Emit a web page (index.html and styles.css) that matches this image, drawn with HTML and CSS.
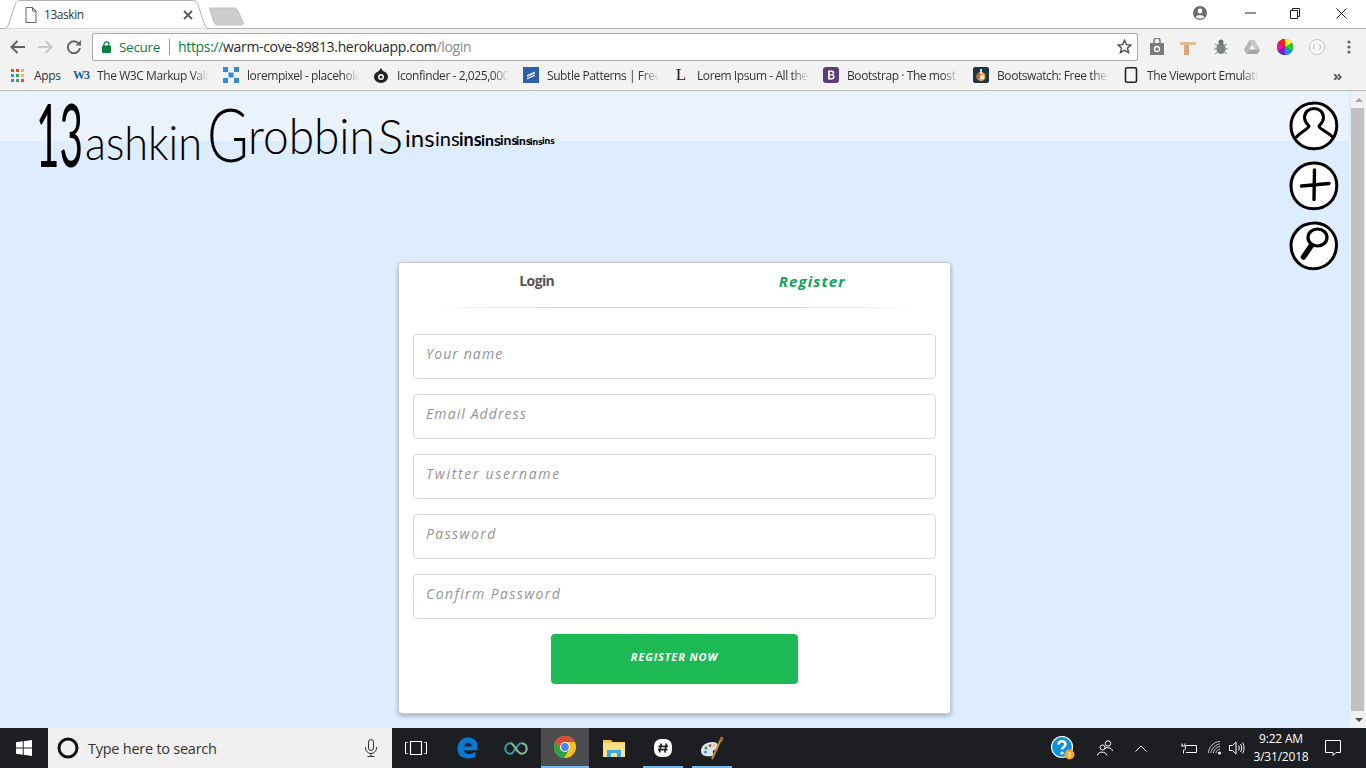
FILE: index.html
```html
<!DOCTYPE html>
<html lang="en">
<head>
<meta charset="utf-8">
<title>13askin</title>
<link rel="stylesheet" href="styles.css">
</head>
<body>
<div class="browser">
  <div class="tabstrip">
    <div class="tab">
      <svg class="tab-shape" width="212" height="29" viewBox="0 0 212 29"><path d="M0 28.5H4C7 28.5 8 26 9 23L15 5C16 2 17 .5 21 .5H192C196 .5 197 2 198 5L204 23C205 26 206 28.5 209 28.5H212" fill="#fff" stroke="#b3b3b3"/></svg>
      <svg class="tab-icon" width="12" height="16" viewBox="0 0 12 16"><path d="M1 .5H7.5L11 4V15.5H1ZM7.5 .5V4H11" fill="#fff" stroke="#5f6368"/></svg>
      <span class="tab-title">13askin</span>
      <svg class="tab-close" width="10" height="10" viewBox="0 0 10 10"><path d="M1 1L9 9M9 1L1 9" stroke="#5a5a5a" stroke-width="1.8"/></svg>
    </div>
    <svg class="newtab" width="36" height="20" viewBox="0 0 36 20"><path d="M1 1H25C27 1 28 2 29 4L34 15C35 17 34 18 32 18H8C6 18 6 17 5 15L1 3C0 2 0 1 1 1Z" fill="#cdcdcd" stroke="#c0c0c0"/></svg>
    <div class="winctl">
      <svg class="profile" width="14" height="14" viewBox="0 0 14 14"><circle cx="7" cy="7" r="7" fill="#6a6d70"/><circle cx="7" cy="5" r="2.4" fill="#fff"/><path d="M2.6 11C3.6 8.8 10.4 8.8 11.4 11C9 13.2 5 13.2 2.6 11Z" fill="#fff"/></svg>
      <svg class="minimize" width="11" height="2" viewBox="0 0 11 2"><path d="M0 1H11" stroke="#222"/></svg>
      <svg class="restore" width="10" height="11" viewBox="0 0 10 11"><path d="M.5 2.5H7.5V10.5H.5ZM2.5 2.5V.5H9.5V8.5H7.5" fill="none" stroke="#222"/></svg>
      <svg class="close" width="11" height="11" viewBox="0 0 11 11"><path d="M.5 .5L10.5 10.5M10.5 .5L.5 10.5" stroke="#222"/></svg>
    </div>
  </div>

  <div class="toolbar">
    <svg class="nav back" width="16" height="14" viewBox="0 0 16 14"><path d="M7.5 1L1.500 7L7.5 13M2 7H15" fill="none" stroke="#5f6368" stroke-width="2"/></svg>
    <svg class="nav forward" width="16" height="14" viewBox="0 0 16 14"><path d="M8.5 1L14.5 7L8.5 13M14 7H1" fill="none" stroke="#c9c9c9" stroke-width="2"/></svg>
    <svg class="nav reload" width="14" height="14" viewBox="0 0 14 14"><path d="M11.6 3.5A6 6 0 1 0 12.9 8" fill="none" stroke="#5f6368" stroke-width="1.9"/><path d="M8.5 5.5H14V0Z" fill="#5f6368"/></svg>
    <div class="omnibox">
      <svg class="lock" width="9" height="12" viewBox="0 0 9 12"><path d="M2 5V3.3A2.5 2.5 0 0 1 7 3.3V5" fill="none" stroke="#0b8043" stroke-width="1.3"/><rect y="4.5" width="9" height="7.5" rx="1" fill="#0b8043"/></svg>
      <span class="secure">Secure</span>
      <span class="omni-sep"></span>
      <span class="url"><span class="scheme">https://</span>warm-cove-89813.herokuapp.com<span class="path">/login</span></span>
      <svg class="star" width="15" height="15" viewBox="0 0 15 15"><path d="M7.5 1.3L9.4 5.6L14 6L10.5 9L11.6 13.6L7.5 11.2L3.4 13.6L4.5 9L1 6L5.6 5.6Z" fill="none" stroke="#444" stroke-width="1.3"/></svg>
    </div>
    <div class="extensions">
      <svg width="16" height="17" viewBox="0 0 16 17"><path d="M1 5H15V17H1Z" fill="#7a7a7a"/><path d="M5 6V3A3 3 0 0 1 11 3V6" fill="none" stroke="#7a7a7a" stroke-width="1.5"/><circle cx="8" cy="11" r="2.5" fill="none" stroke="#fff" stroke-width="1.3"/></svg>
      <svg width="16" height="16" viewBox="0 0 16 16"><path d="M0 3H16V6H9V16H4V6H0Z" fill="#e6ba92"/><path d="M4 6H9V16H4Z" fill="#dba67a"/></svg>
      <svg width="14" height="17" viewBox="0 0 14 17"><ellipse cx="7" cy="10.5" rx="4.5" ry="5.5" fill="#7d8580"/><circle cx="7" cy="4" r="2.5" fill="#6c726e"/><path d="M1 6L4 8M13 6L10 8M0 11H3M14 11H11M1 16L4 13.5M13 16L10 13.5" stroke="#7d8580"/></svg>
      <svg width="16" height="14" viewBox="0 0 16 14"><path d="M5.5 0H10.5L16 9.5H11Z" fill="#c6c6c6"/><path d="M5.5 0L0 9.5L2.5 14L8 4.5Z" fill="#b4b4b4"/><path d="M2.5 14H13.5L16 9.5H5.2Z" fill="#a5a5a5"/></svg>
      <svg width="16" height="16" viewBox="0 0 16 16"><circle cx="8" cy="8" r="8" fill="#1a1a1a"/><path d="M8 8V0A8 8 0 0 1 15 4Z" fill="#ff2" /><path d="M8 8L15 4A8 8 0 0 1 15 12Z" fill="#2c3"/><path d="M8 8L15 12A8 8 0 0 1 8 16Z" fill="#19d"/><path d="M8 8V16A8 8 0 0 1 1 12Z" fill="#72c"/><path d="M8 8L1 12A8 8 0 0 1 1 4Z" fill="#e1a"/><path d="M8 8L1 4A8 8 0 0 1 8 0Z" fill="#e22"/></svg>
      <svg width="16" height="16" viewBox="0 0 16 16"><circle cx="8" cy="8" r="7.5" fill="#fafafa" stroke="#c4c4c4"/><path d="M5.5 5L4.5 8L5.5 11M10.5 5L11.5 8L10.5 11" fill="none" stroke="#bbb"/></svg>
      <svg width="4" height="14" viewBox="0 0 4 14"><circle cx="2" cy="2" r="1.6" fill="#666"/><circle cx="2" cy="7" r="1.6" fill="#666"/><circle cx="2" cy="12" r="1.6" fill="#666"/></svg>
    </div>
  </div>

  <div class="bookmarks">
    <div class="apps">
      <svg width="13" height="13" viewBox="0 0 13 13"><g><rect width="3" height="3" fill="#e8453c"/><rect x="5" width="3" height="3" fill="#e8453c"/><rect x="10" width="3" height="3" fill="#f9bb2d"/><rect y="5" width="3" height="3" fill="#4285f4"/><rect x="5" y="5" width="3" height="3" fill="#34a853"/><rect x="10" y="5" width="3" height="3" fill="#f9bb2d"/><rect y="10" width="3" height="3" fill="#4285f4"/><rect x="5" y="10" width="3" height="3" fill="#34a853"/><rect x="10" y="10" width="3" height="3" fill="#e8453c"/></g></svg>
      <span>Apps</span>
    </div>
    <div class="bookmark"><span class="w3">W3</span><span class="bm-text">The W3C Markup Validation</span></div>
    <div class="bookmark"><svg class="bm-icon" width="16" height="16" viewBox="0 0 16 16"><path d="M0 0H5V5H0ZM11 0H16V5H11ZM5.5 5.5H10.5V10.5H5.5ZM0 11H5V16H0ZM11 11H16V16H11Z" fill="#2b8fd6"/></svg><span class="bm-text">lorempixel - placeholder</span></div>
    <div class="bookmark"><svg class="bm-icon" width="16" height="16" viewBox="0 0 16 16"><path d="M8 1L10 4C13 5 15 7 15 10A7 6 0 0 1 1 10C1 7 3 5 6 4Z" fill="#222"/><circle cx="8" cy="10" r="3" fill="#fff"/><circle cx="8" cy="10" r="1.5" fill="#222"/></svg><span class="bm-text">Iconfinder - 2,025,000 free</span></div>
    <div class="bookmark"><svg class="bm-icon" width="16" height="16" viewBox="0 0 16 16"><rect width="16" height="16" fill="#2f5da8"/><path d="M4 8L12 4.5V6.5L4 10ZM4 11L12 7.5V9L4 12.5Z" fill="#dfe8f5"/></svg><span class="bm-text">Subtle Patterns | Free textures</span></div>
    <div class="bookmark"><span class="lorem-l">L</span><span class="bm-text">Lorem Ipsum - All the facts</span></div>
    <div class="bookmark"><svg class="bm-icon" width="16" height="16" viewBox="0 0 16 16"><rect width="16" height="16" rx="3" fill="#563d7c"/><path d="M5 3.5H9C12 3.5 12 7.5 9.5 7.8C12.5 8 12.5 12.5 9 12.5H5ZM6.8 5V7.2H8.8C10 7.2 10 5 8.8 5ZM6.8 8.5V11H9C10.5 11 10.5 8.5 9 8.5Z" fill="#fff" fill-rule="evenodd"/></svg><span class="bm-text">Bootstrap · The most popular</span></div>
    <div class="bookmark"><svg class="bm-icon" width="16" height="16" viewBox="0 0 16 16"><rect width="16" height="16" rx="2" fill="#1e3448"/><circle cx="8" cy="9.5" r="4.5" fill="#f6a02d"/><path d="M8 5A4.5 4.5 0 0 0 5 12.8L8 9.5Z" fill="#e8542b"/><circle cx="9" cy="10" r="2.2" fill="#fff"/><path d="M8 2V7" stroke="#fff" stroke-width="1.6"/></svg><span class="bm-text">Bootswatch: Free themes for</span></div>
    <div class="bookmark"><svg class="bm-icon" width="16" height="16" viewBox="0 0 16 16"><rect x="2.5" y=".8" width="11" height="14.4" rx="1.5" fill="#f3f3f3" stroke="#222" stroke-width="1.6"/></svg><span class="bm-text">The Viewport Emulator</span></div>
    <span class="bm-more">»</span>
  </div>
</div>

<div class="viewport">
  <main class="page">
    <header class="band">
      <h1 class="logo"><span class="l-13">13</span><span class="l-a">ashkin</span><span class="l-g">G</span><span class="l-r">robbin</span><span class="l-s">S</span><span class="l-i1">ins</span><span class="l-i2">ins</span><span class="l-i3">ins</span><span class="l-i4">ins</span><span class="l-i5">ins</span><span class="l-i6">ins</span><span class="l-i7">ins</span><span class="l-i8">ins</span></h1>
    </header>
    <nav class="side-icons">
      <svg width="50" height="50" viewBox="0 0 50 50"><path d="M23 2.2C36 .8 48 11 47.8 25C47.5 38 37 48.3 24.5 47.8C11 47.5 1.8 37 2 24.5C2.3 12.5 11 3 23 2.2Z" fill="#fff" stroke="#000" stroke-width="3"/><path d="M25 7.5C20.5 7.5 15.5 10.5 15.500 16.5C15.5 21 18.5 23.5 20 25C20.5 27.5 12.5 30 7.5 36M25 7.5C30 7.5 34.5 11 34.5 16.5C34.5 21 31.5 23.5 30 25C29.5 27.5 37.5 30 43 35.5" fill="none" stroke="#000" stroke-width="3" stroke-linecap="round" stroke-linejoin="round"/></svg>
      <svg width="50" height="50" viewBox="0 0 50 50"><path d="M25 2C38 1.8 47.8 12 47.8 24.5C47.8 38 38 47.8 24.5 47.8C11 47.8 2 37.5 2 24.5C2 12 12 2.2 25 2Z" fill="#fff" stroke="#000" stroke-width="3"/><path d="M12.5 25L40 22.5M25.5 9L25 38.5" fill="none" stroke="#000" stroke-width="3.4" stroke-linecap="round"/></svg>
      <svg width="50" height="50" viewBox="0 0 50 50"><path d="M27 2C39 3 48 13 47.5 25C47 38 37 47.8 24.5 47.8C11 47.5 2 37 2 24C2.2 13 11 5 17 3.5C20 2.5 24 1.8 27 2Z" fill="#fff" stroke="#000" stroke-width="3"/><ellipse cx="28.5" cy="16.5" rx="9.5" ry="8.5" fill="none" stroke="#000" stroke-width="3.2"/><path d="M22 25L14.5 36" fill="none" stroke="#000" stroke-width="5.5" stroke-linecap="round"/></svg>
    </nav>
    <section class="card">
      <div class="tabs">
        <a class="tab-link login">Login</a>
        <a class="tab-link register">Register</a>
      </div>
      <div class="divider"></div>
      <form class="form">
        <input class="field" type="text" placeholder="Your name">
        <input class="field" type="text" placeholder="Email Address">
        <input class="field f-wide" type="text" placeholder="Twitter username">
        <input class="field f-mid" type="text" placeholder="Password">
        <input class="field f-mid" type="text" placeholder="Confirm Password">
        <button class="submit" type="button">REGISTER NOW</button>
      </form>
    </section>
  </main>
  <aside class="scrollbar">
    <div class="sb-btn"><span class="sb-up"></span></div>
    <div class="sb-thumb"></div>
    <div class="sb-btn"><span class="sb-down"></span></div>
  </aside>
</div>

<footer class="taskbar">
  <div class="start">
    <svg width="16" height="16" viewBox="0 0 16 16"><path d="M0 2.3L6.8 1.3V7.5H0ZM7.7 1.2L16 0V7.5H7.7ZM0 8.5H6.8V14.7L0 13.7ZM7.7 8.5H16V16L7.7 14.8Z" fill="#fff"/></svg>
  </div>
  <div class="search">
    <svg class="cortana" width="22" height="22" viewBox="0 0 22 22"><circle cx="11" cy="11" r="9" fill="none" stroke="#111" stroke-width="3"/></svg>
    <span class="search-text">Type here to search</span>
    <svg class="mic" width="12" height="18" viewBox="0 0 12 18"><rect x="3.5" y=".5" width="5" height="11" rx="2.5" fill="none" stroke="#333"/><path d="M.5 8V9A5.5 5.5 0 0 0 11.5 9V8M6 14.5V17.5M2.5 17.5H9.5" fill="none" stroke="#333"/></svg>
  </div>
  <div class="tile taskview">
    <svg width="22" height="14" viewBox="0 0 22 14"><path d="M5.5 .5H16.5V13.5H5.5Z" fill="none" stroke="#fff" stroke-width="1.2"/><path d="M2.5 1.5H.5V12.5H2.5M19.5 1.5H21.5V12.5H19.5" fill="none" stroke="#fff"/></svg>
  </div>
  <div class="tile">
    <svg width="21" height="22" viewBox="0 0 21 22"><path d="M2.5 9.5H20.5C21 4 16.5 .5 11.5 .5C5 .5 .5 5 .5 12C.5 18 5 21.5 10.5 21.5C13.5 21.5 16 21 18.5 19.5V14.8C13 18.5 7.2 17.5 7.2 13.3H20.5V9.5H7.3C7.5 4.5 14.5 4.5 14.7 9.5" fill="#0a78d4"/></svg>
  </div>
  <div class="tile">
    <svg width="24" height="13" viewBox="0 0 24 13"><path d="M6.5 1.3C3.5 1.3 1.3 3.5 1.3 6.5S3.5 11.7 6.5 11.7C10.5 11.7 12.5 1.3 17.5 1.3" fill="none" stroke="#3b9ea5" stroke-width="2"/><path d="M6.5 1.3C10.5 1.3 12.5 11.7 17.5 11.7C20.5 11.7 22.7 9.5 22.7 6.5S20.5 1.3 17.5 1.3" fill="none" stroke="#7cc79a" stroke-width="2"/></svg>
  </div>
  <div class="tile active">
    <svg width="22" height="22" viewBox="0 0 22 22"><circle cx="11" cy="11" r="11" fill="#fbc116"/><path d="M11 0A11 11 0 0 0 1.5 5.5L6 13.5L11 6H21A11 11 0 0 0 11 0Z" fill="#dd4b3d"/><path d="M1.5 5.5A11 11 0 0 0 10 22L15 14L6 13.5Z" fill="#2c9f49"/><circle cx="11" cy="11" r="5" fill="#fff"/><circle cx="11" cy="11" r="3.9" fill="#4a86e8"/></svg>
  </div>
  <div class="tile">
    <svg width="22" height="18" viewBox="0 0 22 18"><path d="M0 1H8L9.5 3H22V18H0Z" fill="#f2c94c"/><path d="M0 4H22V18H0Z" fill="#fbe08a"/><path d="M4 18V11H18V18H14V14H8V18Z" fill="#3fa9e0"/></svg>
  </div>
  <div class="tile pinned">
    <svg width="18" height="18" viewBox="0 0 18 18"><rect width="18" height="18" rx="7" fill="#fff"/><path d="M7.2 4.5L5.5 13.5M12.5 4.5L10.8 13.5M4.5 7.3H14M4 10.7H13.5" stroke="#222" stroke-width="1.7"/></svg>
  </div>
  <div class="tile pinned">
    <svg width="24" height="24" viewBox="0 0 24 24"><path d="M1 15C1 9 7 6 13 6C17 6 19 9 18 12C17 15 14 13 13 15C12 17 15 19 12 20C7 21 1 20 1 15Z" fill="#d8e6ef"/><circle cx="6" cy="12" r="1.5" fill="#3f9c3f"/><circle cx="10" cy="9.5" r="1.5" fill="#d9534f"/><circle cx="5.5" cy="16" r="1.5" fill="#4a90d9"/><circle cx="14" cy="9.5" r="1.3" fill="#f0c040"/><path d="M22 1L12 23" stroke="#c98a3c" stroke-width="2"/><path d="M20.5 1L23.5 2.5L22 6L19.5 5Z" fill="#a56a2a"/></svg>
  </div>
  <div class="tray">
    <svg class="tray-help" width="24" height="24" viewBox="0 0 24 24"><circle cx="11" cy="11" r="10.5" fill="#0e8fdc" stroke="#fff" stroke-width="1.2"/><path d="M7.5 8.5C7.5 4 14.5 4 14.5 8.5C14.5 11 11 11 11 13.5" fill="none" stroke="#fff" stroke-width="2.5"/><circle cx="11" cy="17" r="1.6" fill="#fff"/><circle cx="18.5" cy="18.5" r="5" fill="#f6a623"/><path d="M18.5 16V21" stroke="#fff" stroke-width="1.5"/></svg>
    <svg class="tray-people" width="16" height="17" viewBox="0 0 16 17"><circle cx="5.5" cy="7.5" r="2.5" fill="none" stroke="#fff"/><circle cx="11" cy="3.5" r="2.7" fill="none" stroke="#fff"/><path d="M.5 15.5C.5 11 9 11 10 15.5M7.5 9C8 7 15 7 15.5 11" fill="none" stroke="#fff"/></svg>
    <svg class="tray-chevron" width="12" height="7" viewBox="0 0 12 7"><path d="M.5 6.5L6 1L11.5 6.5" fill="none" stroke="#fff"/></svg>
    <svg class="tray-battery" width="16" height="11" viewBox="0 0 16 11"><path d="M5 2.5H15.5V9.5H5" fill="none" stroke="#fff"/><path d="M1 .5V3M4 .5V3M.5 3H4.5V5.5C4.5 7 3 7 2.5 7V10.5" fill="none" stroke="#fff"/></svg>
    <svg class="tray-wifi" width="14" height="14" viewBox="0 0 14 14"><path d="M.5 12C.5 6 6 .5 12 .5M3 12C3 8 8 3 12 3M5.5 12C5.5 9 9 5.5 12 5.5M8 12C8 10.5 10 8 12 8" fill="none" stroke="#c9c9c9"/><circle cx="11.5" cy="12" r="1.5" fill="#fff"/></svg>
    <svg class="tray-vol" width="17" height="14" viewBox="0 0 17 14"><path d="M.5 4.5H3.5L7 1V13L3.5 9.5H.5Z" fill="none" stroke="#fff"/><path d="M9.5 4.5C10.5 6 10.5 8 9.5 9.5M11.5 3C13 5 13 9 11.5 11M13.5 1.5C15.5 4.5 15.5 9.5 13.5 12.5" fill="none" stroke="#fff"/></svg>
    <div class="clock"><span>9:22 AM</span><span>3/31/2018</span></div>
    <svg class="tray-note" width="16" height="16" viewBox="0 0 16 16"><path d="M.5 .5H15.5V12.5H11L8 15.5V12.5H.5Z" fill="none" stroke="#fff"/></svg>
  </div>
</footer>
</body>
</html>
```
FILE: styles.css
```css
* { box-sizing: border-box; }
html, body { margin: 0; padding: 0; }
body {
  width: 1366px;
  height: 768px;
  overflow: hidden;
  display: flex;
  flex-direction: column;
  font-family: "Open Sans", "Liberation Sans", sans-serif;
  background: #fff;
}
svg { display: block; flex: none; }

/* Browser chrome */
.browser { flex: none; height: 91px; display: flex; flex-direction: column; }
.tabstrip {
  height: 29px;
  background: #fff;
  border-bottom: 1px solid #b3b3b3;
  display: flex;
  align-items: flex-start;
}
.tab {
  position: relative;
  width: 208px;
  height: 29px;
  display: flex;
  align-items: center;
  padding: 0 0 0 25px;
  flex: none;
}
.tab-shape { position: absolute; left: 0; top: 0; }
.tab-icon, .tab-title, .tab-close { position: relative; }
.tab-title { font-size: 12px; color: #333; margin-left: 7px; width: 139px; letter-spacing: -.45px; }
.tab-close { margin-top: 1px; }
.newtab { margin: 7px 0 0 1px; }
.winctl { margin-left: auto; display: flex; align-items: center; height: 26px; }
.profile { margin-right: 38px; }
.minimize { margin-right: 34px; }
.restore { margin-right: 36px; }
.close { margin-right: 19px; }

.toolbar {
  height: 33px;
  padding-top: 2px;
  background: #f2f2f2;
  display: flex;
  align-items: center;
}
.nav.back { margin-left: 10px; }
.nav.forward { margin-left: 11px; }
.nav.reload { margin-left: 14px; }
.omnibox {
  margin-left: 11px;
  width: 1046px;
  height: 28px;
  background: #fff;
  border: 1px solid #a9a9a9;
  border-radius: 2px;
  display: flex;
  align-items: center;
  padding-left: 9px;
}
.secure { color: #0b8043; font-size: 13.5px; margin-left: 8px; letter-spacing: -.3px; }
.omni-sep { width: 1px; height: 16px; background: #9a9a9a; margin: 0 8px 0 9px; }
.url { font-size: 14px; color: #2a2a2a; letter-spacing: -.34px; }
.scheme { color: #0b8043; }
.path { color: #8a8a8a; }
.star { margin-left: auto; margin-right: 5px; }
.extensions { display: flex; align-items: center; width: 228px; }
.extensions svg:nth-child(1) { margin-left: 11px; }
.extensions svg:nth-child(2) { margin-left: 15px; }
.extensions svg:nth-child(3) { margin-left: 18px; }
.extensions svg:nth-child(4) { margin-left: 16px; }
.extensions svg:nth-child(5) { margin-left: 17px; }
.extensions svg:nth-child(6) { margin-left: 16px; }
.extensions svg:nth-child(7) { margin-left: 22px; }

.bookmarks {
  height: 29px;
  padding-bottom: 2px;
  background: #f2f2f2;
  border-bottom: 1px solid #b9b9b9;
  display: flex;
  align-items: center;
  font-size: 12px;
  color: #333;
}
.apps { width: 73px; padding-left: 11px; display: flex; align-items: center; gap: 10px; letter-spacing: -.3px; flex: none; }
.bookmark { width: 150px; flex: none; display: flex; align-items: center; }
.bm-icon { width: 16px; }
.bm-text {
  margin-left: 8px;
  width: 112px;
  white-space: nowrap;
  overflow: hidden;
  letter-spacing: -.42px;
  -webkit-mask-image: linear-gradient(90deg, #000 85%, transparent);
  mask-image: linear-gradient(90deg, #000 85%, transparent);
}
.w3 { width: 16px; font: bold 12px "Liberation Serif", serif; color: #1b5f9e; letter-spacing: -1px; }
.lorem-l { width: 16px; text-align: center; font: 17px "Liberation Serif", serif; color: #222; }
.bm-more { margin-left: 60px; font-size: 15px; font-weight: 700; color: #555; line-height: 1; }

/* Page */
.viewport { flex: 1; min-height: 0; display: flex; background: #ddedff; }
.page { position: relative; flex: 1; min-width: 0; padding-right: 2px; }
.band { height: 50px; background: #eaf2fe; }
.logo {
  margin: 0;
  padding: 0 0 0 36px;
  display: flex;
  align-items: baseline;
  height: 80px;
  font-family: "Lato", "Open Sans", sans-serif;
  font-weight: 300;
  color: #000;
  white-space: nowrap;
  line-height: 1;
}
.logo span { display: block; flex: none; transform-origin: 0 100%; }
.l-13 { font-size: 88px; width: 47px; transform: translateY(-2px) scaleX(.46); font-weight: 400; }
.l-a  { font-size: 48px; width: 115px; margin-left: 2px; transform: translateY(-9px) scaleX(.9); }
.l-g  { font-size: 75px; width: 40px; margin-left: 7px; transform: translateY(-7px) scaleX(.76); }
.l-r  { font-size: 50px; width: 126px; margin-left: 1px; transform: translateY(-15px) scaleX(.92); }
.l-s  { font-size: 47px; width: 26px; margin-left: 4px; transform: translateY(-15px); }
.l-i1 { font-size: 24px; width: 28px; margin-left: 1px; transform: translateY(-22px); font-weight: 400; }
.l-i2 { font-size: 20px; width: 23px; margin-left: 2px; transform: translateY(-23px); font-weight: 400; }
.l-i3 { font-size: 18px; width: 21px; margin-left: 1px; transform: translateY(-23px); font-weight: 700; }
.l-i4 { font-size: 16px; width: 19px; margin-left: 1px; transform: translateY(-23px); font-weight: 700; }
.l-i5 { font-size: 14px; width: 16px; transform: translateY(-24px); font-weight: 700; }
.l-i6 { font-size: 12px; width: 14px; transform: translateY(-24px); font-weight: 900; }
.l-i7 { font-size: 10px; width: 12px; transform: translateY(-24px); font-weight: 900; }
.l-i8 { font-size: 10px; width: 13px; transform: translateY(-25px); font-weight: 900; }

.side-icons {
  position: absolute;
  top: 10px;
  right: 12px;
  display: flex;
  flex-direction: column;
  gap: 10px;
}
.card {
  width: 553px;
  height: 452px;
  margin: 121px auto 0;
  background: #fff;
  border: 1px solid #c6cad0;
  border-radius: 4px;
  box-shadow: 0 2px 4px rgba(0, 0, 0, .28);
}
.tabs { display: flex; height: 44px; }
.tab-link {
  flex: 1;
  text-align: center;
  font: 700 14px/36px "Open Sans", sans-serif;
}
.login { color: #555; letter-spacing: -.6px; }
.register { color: #0fa35b; letter-spacing: 1.1px; font-style: italic; font-size: 15px; }
.divider {
  height: 1px;
  margin: 0 30px;
  background: linear-gradient(90deg, transparent, #dcdcdc 25%, #dcdcdc 75%, transparent);
}
.form {
  padding: 26px 14px 0;
  display: flex;
  flex-direction: column;
  gap: 15px;
}
.field {
  height: 45px;
  width: 100%;
  border: 1px solid #dadada;
  border-radius: 4px;
  padding: 0 12px 7px;
  font: italic 14px "Open Sans", sans-serif;
  letter-spacing: 1.1px;
  background: #fff;
  outline: 0;
}
.f-wide { letter-spacing: 1.7px; }
.f-mid { letter-spacing: 1.4px; }
.field::placeholder { color: #949494; opacity: 1; }
.submit {
  align-self: center;
  width: 247px;
  height: 50px;
  border: 0;
  border-radius: 4px;
  background: #1db954;
  color: #fff;
  font: italic 700 11px "Open Sans", sans-serif;
  letter-spacing: .85px;
  padding: 0 0 6px;
}

.scrollbar {
  flex: none;
  width: 15px;
  background: #f1f1f1;
  display: flex;
  flex-direction: column;
}
.sb-btn { height: 17px; flex: none; display: flex; align-items: center; justify-content: center; }
.sb-thumb { flex: 1; background: #c1c1c1; margin-right: 2px; }
.sb-up, .sb-down { width: 0; height: 0; border-left: 4px solid transparent; border-right: 4px solid transparent; }
.sb-up { border-bottom: 4px solid #a3a3a3; }
.sb-down { border-top: 4px solid #505050; }

/* Taskbar */
.taskbar {
  flex: none;
  height: 40px;
  background: #1c1e21;
  display: flex;
  align-items: center;
}
.start { width: 48px; height: 40px; display: flex; align-items: center; justify-content: center; }
.search {
  width: 344px;
  height: 40px;
  background: #f0f0f0;
  display: flex;
  align-items: center;
  padding-left: 9px;
}
.search-text { font-size: 14.5px; color: #333; margin-left: 9px; letter-spacing: -.25px; }
.mic { margin-left: auto; margin-right: 15px; }
.tile {
  position: relative;
  width: 48px;
  height: 40px;
  margin-right: 1px;
  display: flex;
  align-items: center;
  justify-content: center;
  flex: none;
}
.taskview { margin-right: 3px; }
.active { background: #4c4d4f; border-bottom: 2px solid #76b9ed; }
.pinned::after {
  content: "";
  position: absolute;
  left: 4px;
  right: 4px;
  bottom: 0;
  height: 2px;
  background: #76b9ed;
}
.tray { margin-left: auto; display: flex; align-items: center; height: 40px; color: #fff; }
.tray-help { margin-right: 22px; }
.tray-people { margin-right: 22px; }
.tray-chevron { margin-right: 34px; }
.tray-battery { margin-right: 11px; }
.tray-wifi { margin-right: 7px; }
.tray-vol { margin-right: 0; }
.clock {
  width: 70px;
  display: flex;
  flex-direction: column;
  align-items: center;
  font-size: 12px;
  line-height: 18px;
  letter-spacing: -.2px;
  margin-right: 9px;
}
.tray-note { margin-right: 25px; }
```
